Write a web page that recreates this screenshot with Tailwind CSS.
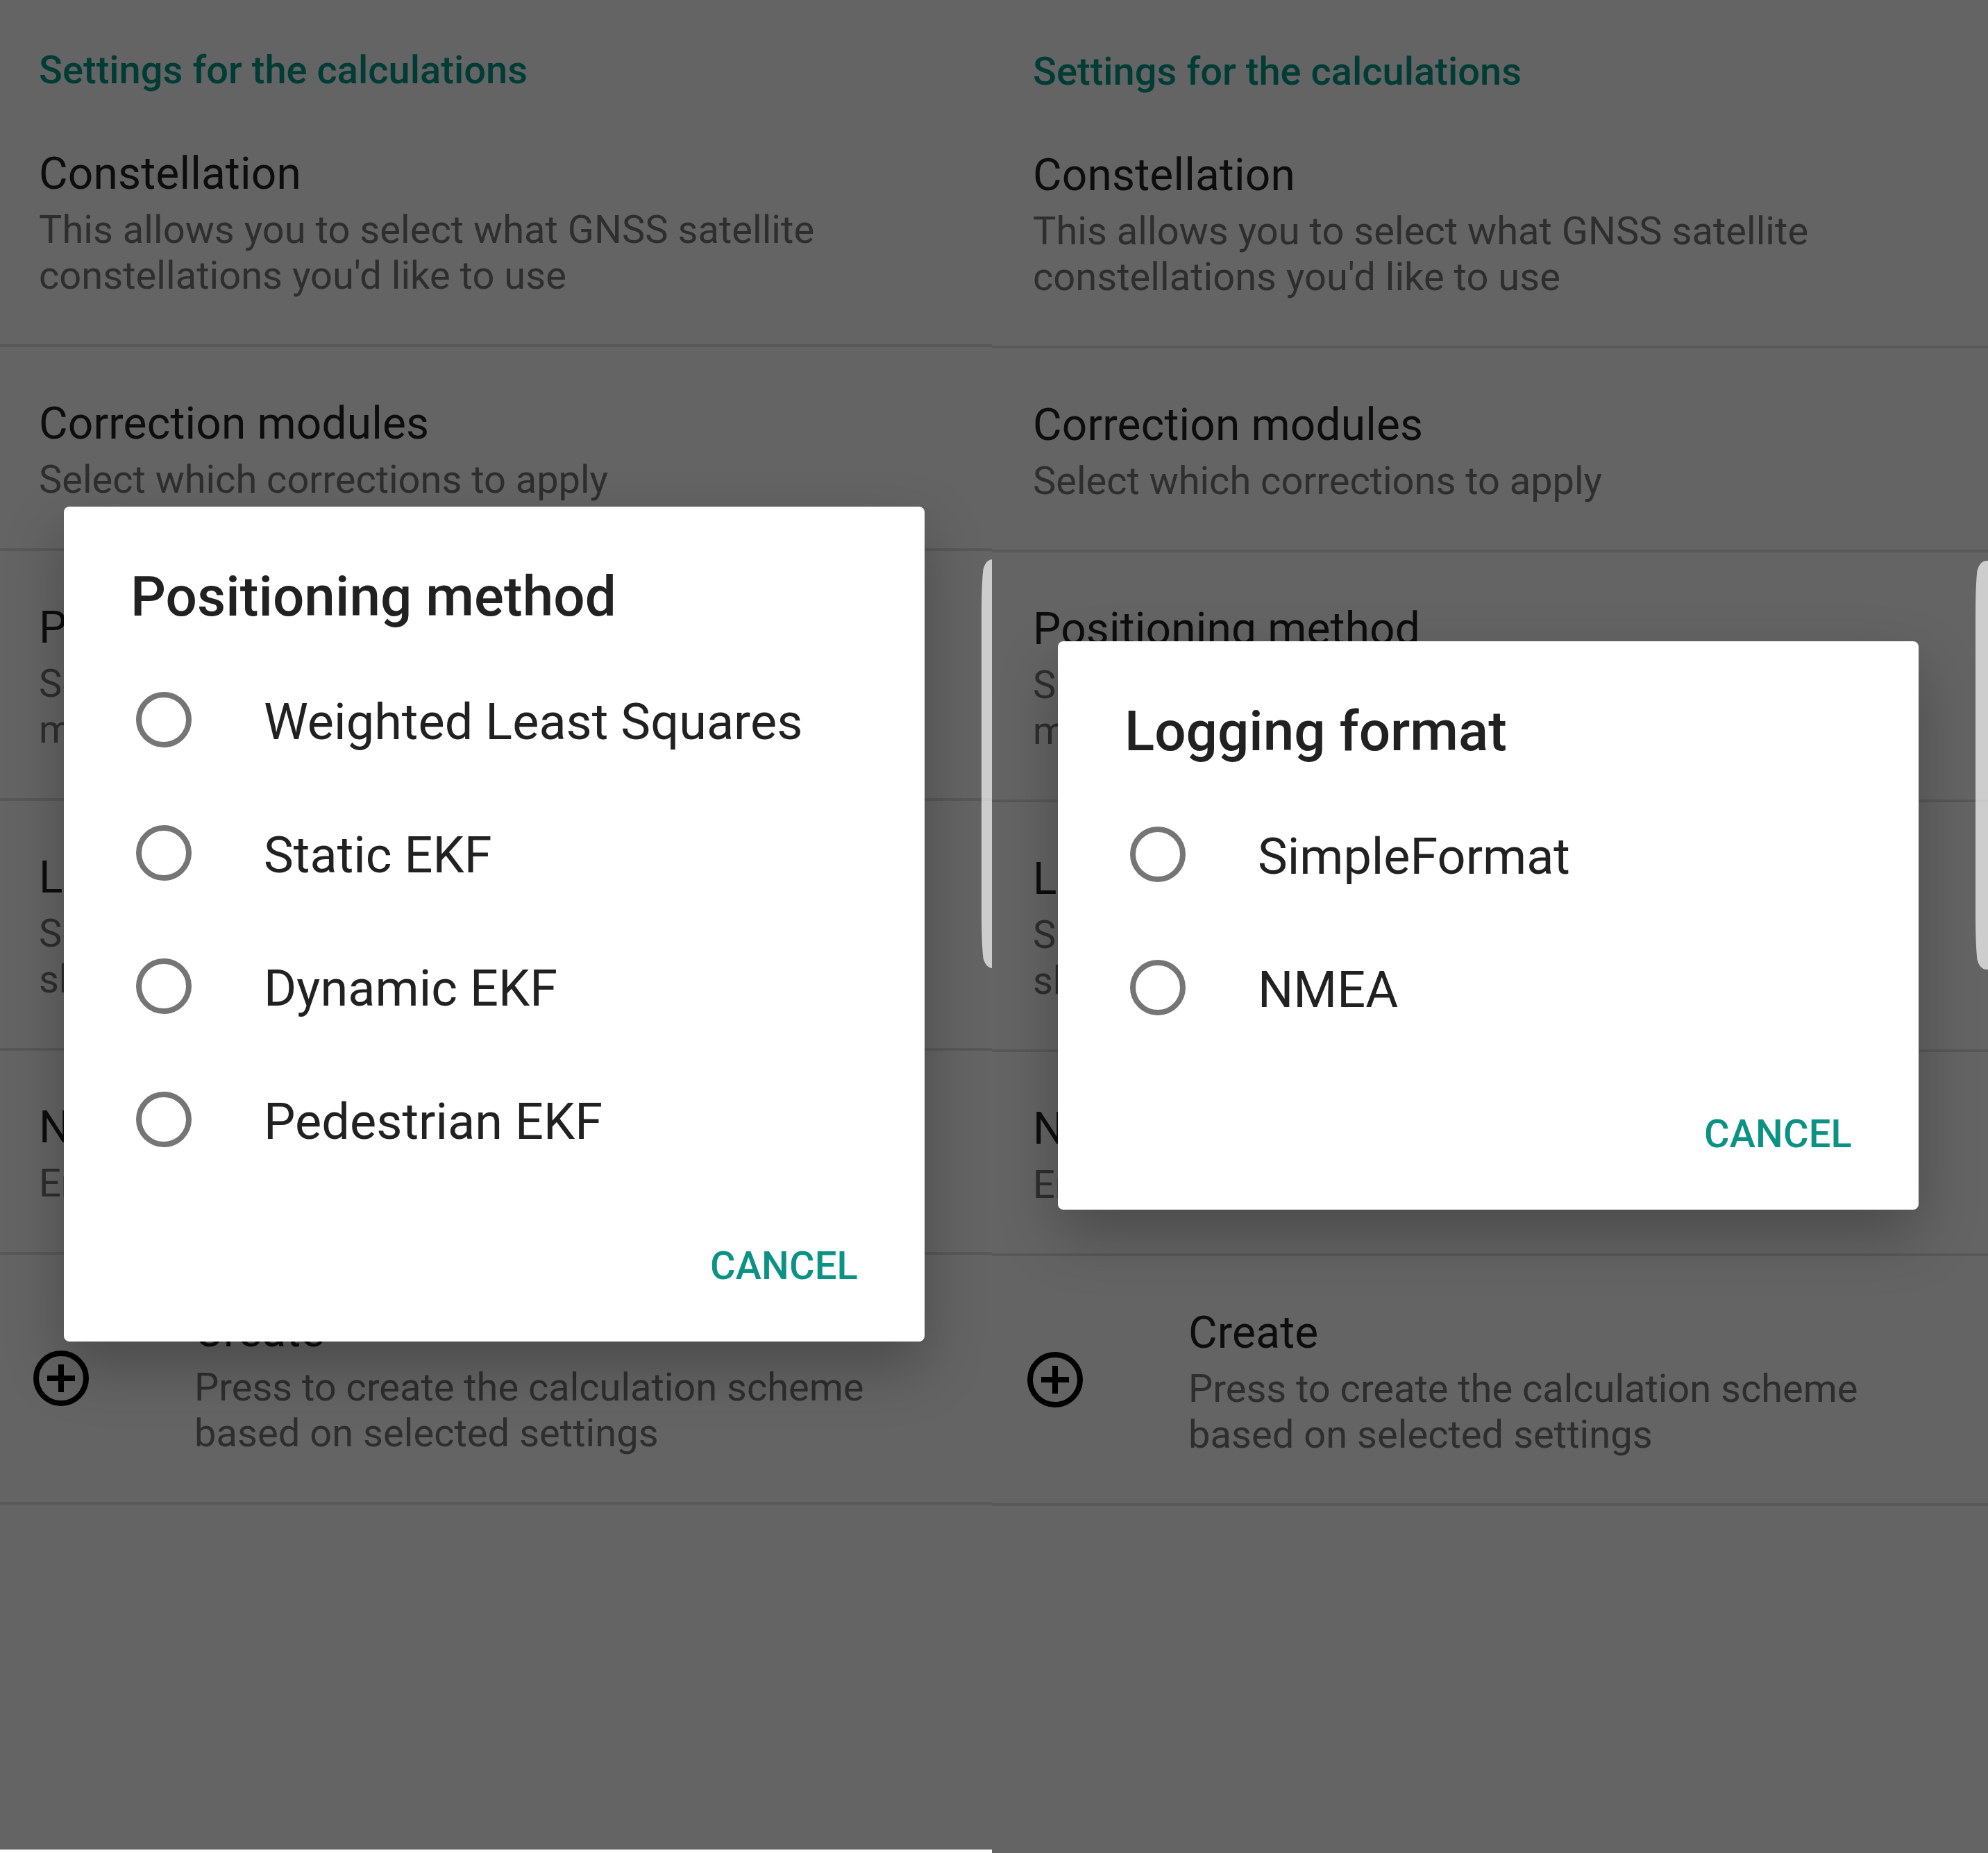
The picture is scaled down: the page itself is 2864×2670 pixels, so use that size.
<!DOCTYPE html>
<html lang="en">
<head>
<meta charset="utf-8">
<title>Calculation settings</title>
<script src="https://cdn.jsdelivr.net/npm/@tailwindcss/browser@4"></script>
</head>
<body class="flex h-[2670px] w-[2864px] overflow-hidden bg-[#646464] font-['Roboto',sans-serif]">

<!-- Screen: positioning method dialog -->
<section class="relative h-[2670px] w-[1429px] shrink-0 overflow-hidden bg-[#646464]">
  <div class="flex h-[2665px] flex-col">
    <h2 class="h-[140px] pt-[68px] pl-14 text-[56px] leading-[66px] font-medium tracking-[0.03px] text-[#003c36]">Settings for the calculations</h2>
    <ul class="flex flex-col text-[56px] leading-[66px] text-[#2e2e2e]">
      <li class="h-[360px] border-b-4 border-[#585858] pt-[73px] pl-14">
        <h3 class="mb-[9px] text-[64px] leading-[76px] tracking-[0.17px] text-[#0d0d0d]">Constellation</h3>
        <p class="tracking-[0.04px]">This allows you to select what GNSS satellite<br>constellations you'd like to use</p>
      </li>
      <li class="h-[294px] border-b-4 border-[#585858] pt-[73px] pl-14">
        <h3 class="mb-[9px] text-[64px] leading-[76px] tracking-[0.17px] text-[#0d0d0d]">Correction modules</h3>
        <p class="tracking-[-0.02px]">Select which corrections to apply</p>
      </li>
      <li class="h-[360px] border-b-4 border-[#585858] pt-[73px] pl-14">
        <h3 class="mb-[9px] text-[64px] leading-[76px] tracking-[0.17px] text-[#0d0d0d]">Positioning method</h3>
        <p>Select the positioning<br>method</p>
      </li>
      <li class="h-[360px] border-b-4 border-[#585858] pt-[73px] pl-14">
        <h3 class="mb-[9px] text-[64px] leading-[76px] tracking-[0.17px] text-[#0d0d0d]">Logging format</h3>
        <p>Select which format<br>should be used</p>
      </li>
      <li class="h-[294px] border-b-4 border-[#585858] pt-[73px] pl-14">
        <h3 class="mb-[9px] text-[64px] leading-[76px] tracking-[0.17px] text-[#0d0d0d]">Name</h3>
        <p>Enter the name</p>
      </li>
      <li class="flex h-[360px] border-b-4 border-[#585858] pl-10">
        <svg class="mt-[130px] mr-36 size-24 shrink-0" viewBox="0 0 24 24" fill="none" stroke="#000" stroke-width="2"><circle cx="12" cy="12" r="9"/><path d="M12 7v10M7 12h10"/></svg>
        <div class="pt-[73px]">
          <h3 class="mb-[9px] text-[64px] leading-[76px] tracking-[0.17px] text-[#0d0d0d]">Create</h3>
          <p class="tracking-[-0.02px]">Press to create the calculation scheme<br><span class="tracking-[0.04px]">based on selected settings</span></p>
        </div>
      </li>
    </ul>
  </div>
  <div class="h-[5px] bg-white"></div>

  <div class="absolute top-[730px] left-[92px] flex h-[1203px] w-[1240px] flex-col rounded-lg bg-white text-[#212121] shadow-[0_36px_84px_rgba(0,0,0,0.26)]">
    <h2 class="mt-[83px] mb-[45px] pl-24 text-[80px] leading-[94px] font-medium tracking-[0.06px]">Positioning method</h2>
    <ul class="flex flex-col text-[72px] leading-[84px] tracking-[0.06px]">
      <li class="flex h-48 items-center pl-[104px]"><span class="mt-[-23px] mr-[104px] size-20 rounded-full border-8 border-[#757575]"></span><span class="mt-[-14px]">Weighted Least Squares</span></li>
      <li class="flex h-48 items-center pl-[104px]"><span class="mt-[-23px] mr-[104px] size-20 rounded-full border-8 border-[#757575]"></span><span class="mt-[-14px]">Static EKF</span></li>
      <li class="flex h-48 items-center pl-[104px]"><span class="mt-[-23px] mr-[104px] size-20 rounded-full border-8 border-[#757575]"></span><span class="mt-[-14px]">Dynamic EKF</span></li>
      <li class="flex h-48 items-center pl-[104px]"><span class="mt-[-23px] mr-[104px] size-20 rounded-full border-8 border-[#757575]"></span><span class="mt-[-14px]">Pedestrian EKF</span></li>
    </ul>
    <div class="flex justify-end pt-[71px] pr-24"><button class="text-[56px] leading-[66px] font-medium tracking-[0.2px] text-[#0c9285]">CANCEL</button></div>
  </div>

  <svg class="absolute top-[806px] left-[1413px] h-[590px] w-[19px]" viewBox="0 0 19 590" fill="#cdcdcd"><path d="M19 0H16Q7 1 3.500 14Q1 35 1 80V509Q1 554 3.500 575Q7 588 16 589H19Z"/><path d="M1 344h18v4H1Z" fill="#c8c8c8"/></svg>
</section>

<!-- Screen: logging format dialog -->
<section class="relative h-[2670px] w-[1435px] shrink-0 overflow-hidden bg-[#646464]">
  <div class="flex flex-col pt-[2px]">
    <h2 class="h-[140px] pt-[68px] pl-[59px] text-[56px] leading-[66px] font-medium tracking-[0.03px] text-[#003c36]">Settings for the calculations</h2>
    <ul class="flex flex-col text-[56px] leading-[66px] text-[#2e2e2e]">
      <li class="h-[360px] border-b-4 border-[#585858] pt-[73px] pl-[59px]">
        <h3 class="mb-[9px] text-[64px] leading-[76px] tracking-[0.17px] text-[#0d0d0d]">Constellation</h3>
        <p class="tracking-[0.04px]">This allows you to select what GNSS satellite<br>constellations you'd like to use</p>
      </li>
      <li class="h-[294px] border-b-4 border-[#585858] pt-[73px] pl-[59px]">
        <h3 class="mb-[9px] text-[64px] leading-[76px] tracking-[0.17px] text-[#0d0d0d]">Correction modules</h3>
        <p class="tracking-[-0.02px]">Select which corrections to apply</p>
      </li>
      <li class="h-[360px] border-b-4 border-[#585858] pt-[73px] pl-[59px]">
        <h3 class="mb-[9px] text-[64px] leading-[76px] tracking-[0.17px] text-[#0d0d0d]">Positioning method</h3>
        <p>Select the positioning<br>method</p>
      </li>
      <li class="h-[360px] border-b-4 border-[#585858] pt-[73px] pl-[59px]">
        <h3 class="mb-[9px] text-[64px] leading-[76px] tracking-[0.17px] text-[#0d0d0d]">Logging format</h3>
        <p>Select which format<br>should be used</p>
      </li>
      <li class="h-[294px] border-b-4 border-[#585858] pt-[73px] pl-[59px]">
        <h3 class="mb-[9px] text-[64px] leading-[76px] tracking-[0.17px] text-[#0d0d0d]">Name</h3>
        <p>Enter the name</p>
      </li>
      <li class="flex h-[360px] border-b-4 border-[#585858] pl-[43px]">
        <svg class="mt-[130px] mr-36 size-24 shrink-0" viewBox="0 0 24 24" fill="none" stroke="#000" stroke-width="2"><circle cx="12" cy="12" r="9"/><path d="M12 7v10M7 12h10"/></svg>
        <div class="pt-[73px]">
          <h3 class="mb-[9px] text-[64px] leading-[76px] tracking-[0.17px] text-[#0d0d0d]">Create</h3>
          <p class="tracking-[-0.02px]">Press to create the calculation scheme<br><span class="tracking-[0.04px]">based on selected settings</span></p>
        </div>
      </li>
    </ul>
  </div>

  <div class="absolute top-[924px] left-[95px] flex h-[819px] w-[1240px] flex-col rounded-lg bg-white text-[#212121] shadow-[0_36px_84px_rgba(0,0,0,0.26)]">
    <h2 class="mt-[83px] mb-[45px] pl-24 text-[80px] leading-[94px] font-medium">Logging format</h2>
    <ul class="flex flex-col text-[72px] leading-[84px]">
      <li class="flex h-48 items-center pl-[104px]"><span class="mt-[-23px] mr-[104px] size-20 rounded-full border-8 border-[#757575]"></span><span class="mt-[-14px]">SimpleFormat</span></li>
      <li class="flex h-48 items-center pl-[104px]"><span class="mt-[-23px] mr-[104px] size-20 rounded-full border-8 border-[#757575]"></span><span class="mt-[-14px]">NMEA</span></li>
    </ul>
    <div class="flex justify-end pt-[71px] pr-24"><button class="text-[56px] leading-[66px] font-medium tracking-[0.2px] text-[#0c9285]">CANCEL</button></div>
  </div>

  <svg class="absolute top-[808px] left-[1416px] h-[590px] w-[19px]" viewBox="0 0 19 590" fill="#cdcdcd"><path d="M19 0H16Q7 1 3.500 14Q1 35 1 80V509Q1 554 3.500 575Q7 588 16 589H19Z"/><path d="M1 344h18v4H1Z" fill="#c8c8c8"/></svg>
</section>
</body>
</html>
